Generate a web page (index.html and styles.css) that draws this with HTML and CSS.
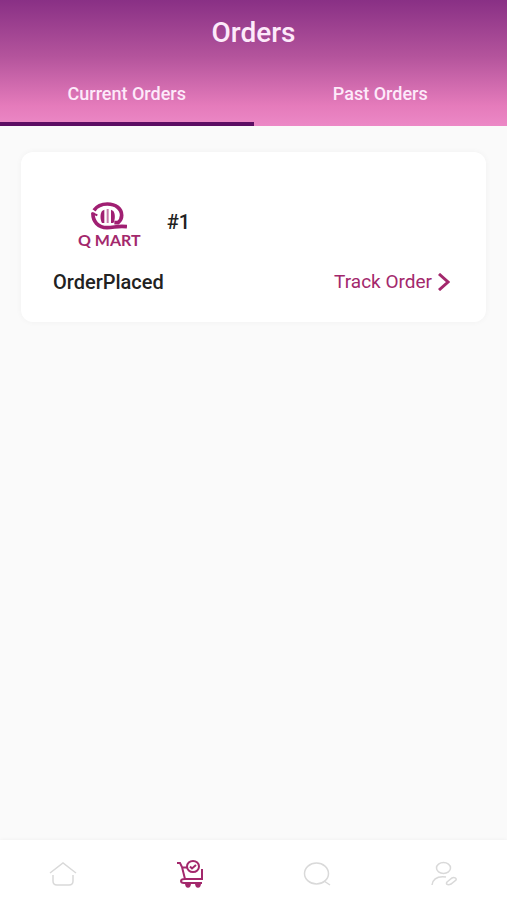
FILE: index.html
```html
<!DOCTYPE html>
<html lang="en">
<head>
  <meta charset="utf-8">
  <meta name="viewport" content="width=device-width, initial-scale=1">
  <title>Orders</title>
  <link rel="stylesheet" href="styles.css">
</head>
<body>
  <header class="header">
    <h1 class="title">Orders</h1>
    <div class="tabs" role="tablist">
      <button class="tab tab-active" type="button" role="tab" aria-selected="true">Current Orders</button>
      <button class="tab" type="button" role="tab" aria-selected="false">Past Orders</button>
    </div>
  </header>

  <main class="content">
    <article class="card">
      <div class="card-top">
        <div class="logo">
          <svg class="logo-mark" viewBox="0 0 108 84" fill="none" stroke="#a01f72" aria-hidden="true">
            <path d="M9 25C18 12 32 6 49 6c26 0 43 15 43 34 0 10-4 17-11 22H70" stroke-width="11"/>
            <path d="M6 32c-2 26 16 45 42 45 22 0 32-7 60-3" stroke-width="11"/>
            <path d="M3 33l16 7" stroke-width="6"/>
            <path d="M40 23v40h-7c-6-10-6-28 0-36zM60 23v40h7c6-10 6-28 0-36z" fill="#a01f72" stroke="none"/>
            <path d="M50 21v42" stroke-width="6" stroke-opacity="0.6"/>
          </svg>
          <span class="logo-name">Q MART</span>
        </div>
        <h2 class="order-number">#1</h2>
      </div>
      <div class="card-bottom">
        <span class="status">OrderPlaced</span>
        <a class="track" href="#track">Track Order
          <svg class="chevron" viewBox="0 0 12 18" fill="none" stroke="#a3286c" stroke-width="3" aria-hidden="true"><path d="M1 1l9 8-9 8"/></svg>
        </a>
      </div>
    </article>
  </main>

  <nav class="nav" aria-label="Main">
    <a class="nav-item" href="#home" aria-label="Home">
      <svg class="icon" viewBox="0 0 28 28"><path d="M1 13L14 3l13 10M4 15v6c0 3 2 4 4 4h12c3 0 4-1 4-4v-6"/></svg>
    </a>
    <a class="nav-item nav-active" href="#orders" aria-label="Orders" aria-current="page">
      <svg class="icon" viewBox="0 0 28 28"><path d="M1 3h3l2 4 3 12h17V9M6 7.500h5M9 19c-3 0-4 1-4 2s1 2 3 2h18"/><ellipse cx="17" cy="6.500" rx="6" ry="5.500"/><path d="M14 6.500l2 2 4-3.500"/><path d="M10 23c0 5 4 5 4 0M20 23c0 5 4 5 4 0" class="wheel"/></svg>
    </a>
    <a class="nav-item" href="#search" aria-label="Search">
      <svg class="icon" viewBox="0 0 28 28"><ellipse cx="13.500" cy="13.500" rx="12" ry="10.500"/><path d="M21 21l6 4"/></svg>
    </a>
    <a class="nav-item" href="#profile" aria-label="Profile">
      <svg class="icon" viewBox="0 0 28 28"><ellipse cx="13.500" cy="8" rx="7" ry="5.500"/><path d="M2 25c1-7 6-9 14-8M17 22l5-4c2-1 5 0 4 2l-5 4c-2 1-6 1-4-2z"/></svg>
    </a>
  </nav>
</body>
</html>
```

FILE: styles.css
```css
* {
  box-sizing: border-box;
}

body {
  margin: 0;
  min-height: 100vh;
  display: flex;
  flex-direction: column;
  background: #fafafa;
  font-family: Roboto, "Liberation Sans", sans-serif;
  color: #222;
}

.header {
  display: flex;
  flex-direction: column;
  background: linear-gradient(#893085, #b4549c 45%, #e57bbb 84%, #ec88c6);
  color: #fdeafa;
}

.title {
  margin: 0;
  padding-top: 16px;
  font-size: 28px;
  line-height: 34px;
  font-weight: 500;
  text-align: center;
}

.tabs {
  display: grid;
  grid-template-columns: 1fr 1fr;
  padding-top: 16px;
}

.tab {
  height: 60px;
  padding: 0;
  border: 0;
  border-bottom: 4px solid transparent;
  background: none;
  color: inherit;
  font: 500 18px/20px Roboto, "Liberation Sans", sans-serif;
}

.tab-active {
  border-bottom-color: #5c0d63;
}

.content {
  flex: 1;
  padding: 26px 21px;
}

.card {
  padding: 48px 36px 28px 32px;
  border-radius: 12px;
  background: #fff;
  box-shadow: 0 0 6px rgba(0, 0, 0, 0.04);
}

.card-top {
  display: flex;
  align-items: flex-start;
  gap: 26px;
  padding-left: 25px;
}

.logo {
  display: flex;
  flex-direction: column;
  align-items: center;
  color: #a3286c;
}

.logo-mark {
  width: 36px;
  height: 28px;
  margin-top: 2px;
}

.logo-name {
  font: 700 16px/20px Lato, sans-serif;
}

.order-number {
  margin: 0;
  padding-top: 10px;
  font-size: 20px;
  line-height: 24px;
  font-weight: 500;
}

.card-bottom {
  display: flex;
  align-items: center;
  justify-content: space-between;
  padding-top: 20px;
  font-size: 19px;
  line-height: 24px;
}

.status {
  font-size: 20px;
  font-weight: 500;
}

.track {
  display: flex;
  align-items: center;
  gap: 6px;
  color: #a3286c;
  text-decoration: none;
}

.chevron {
  width: 12px;
  height: 18px;
}

.nav {
  display: grid;
  grid-template-columns: repeat(4, 1fr);
  height: 60px;
  background: #fff;
  box-shadow: 0 0 4px rgba(0, 0, 0, 0.05);
}

.nav-item {
  display: flex;
  align-items: center;
  justify-content: center;
  padding-top: 8px;
  color: #d9d9d9;
}

.nav-active {
  color: #a3286c;
}

.icon {
  width: 28px;
  height: 28px;
  fill: none;
  stroke: currentColor;
  stroke-width: 1.5;
}

.nav-active .icon {
  stroke-width: 2;
}

.wheel {
  fill: currentColor;
}
```
